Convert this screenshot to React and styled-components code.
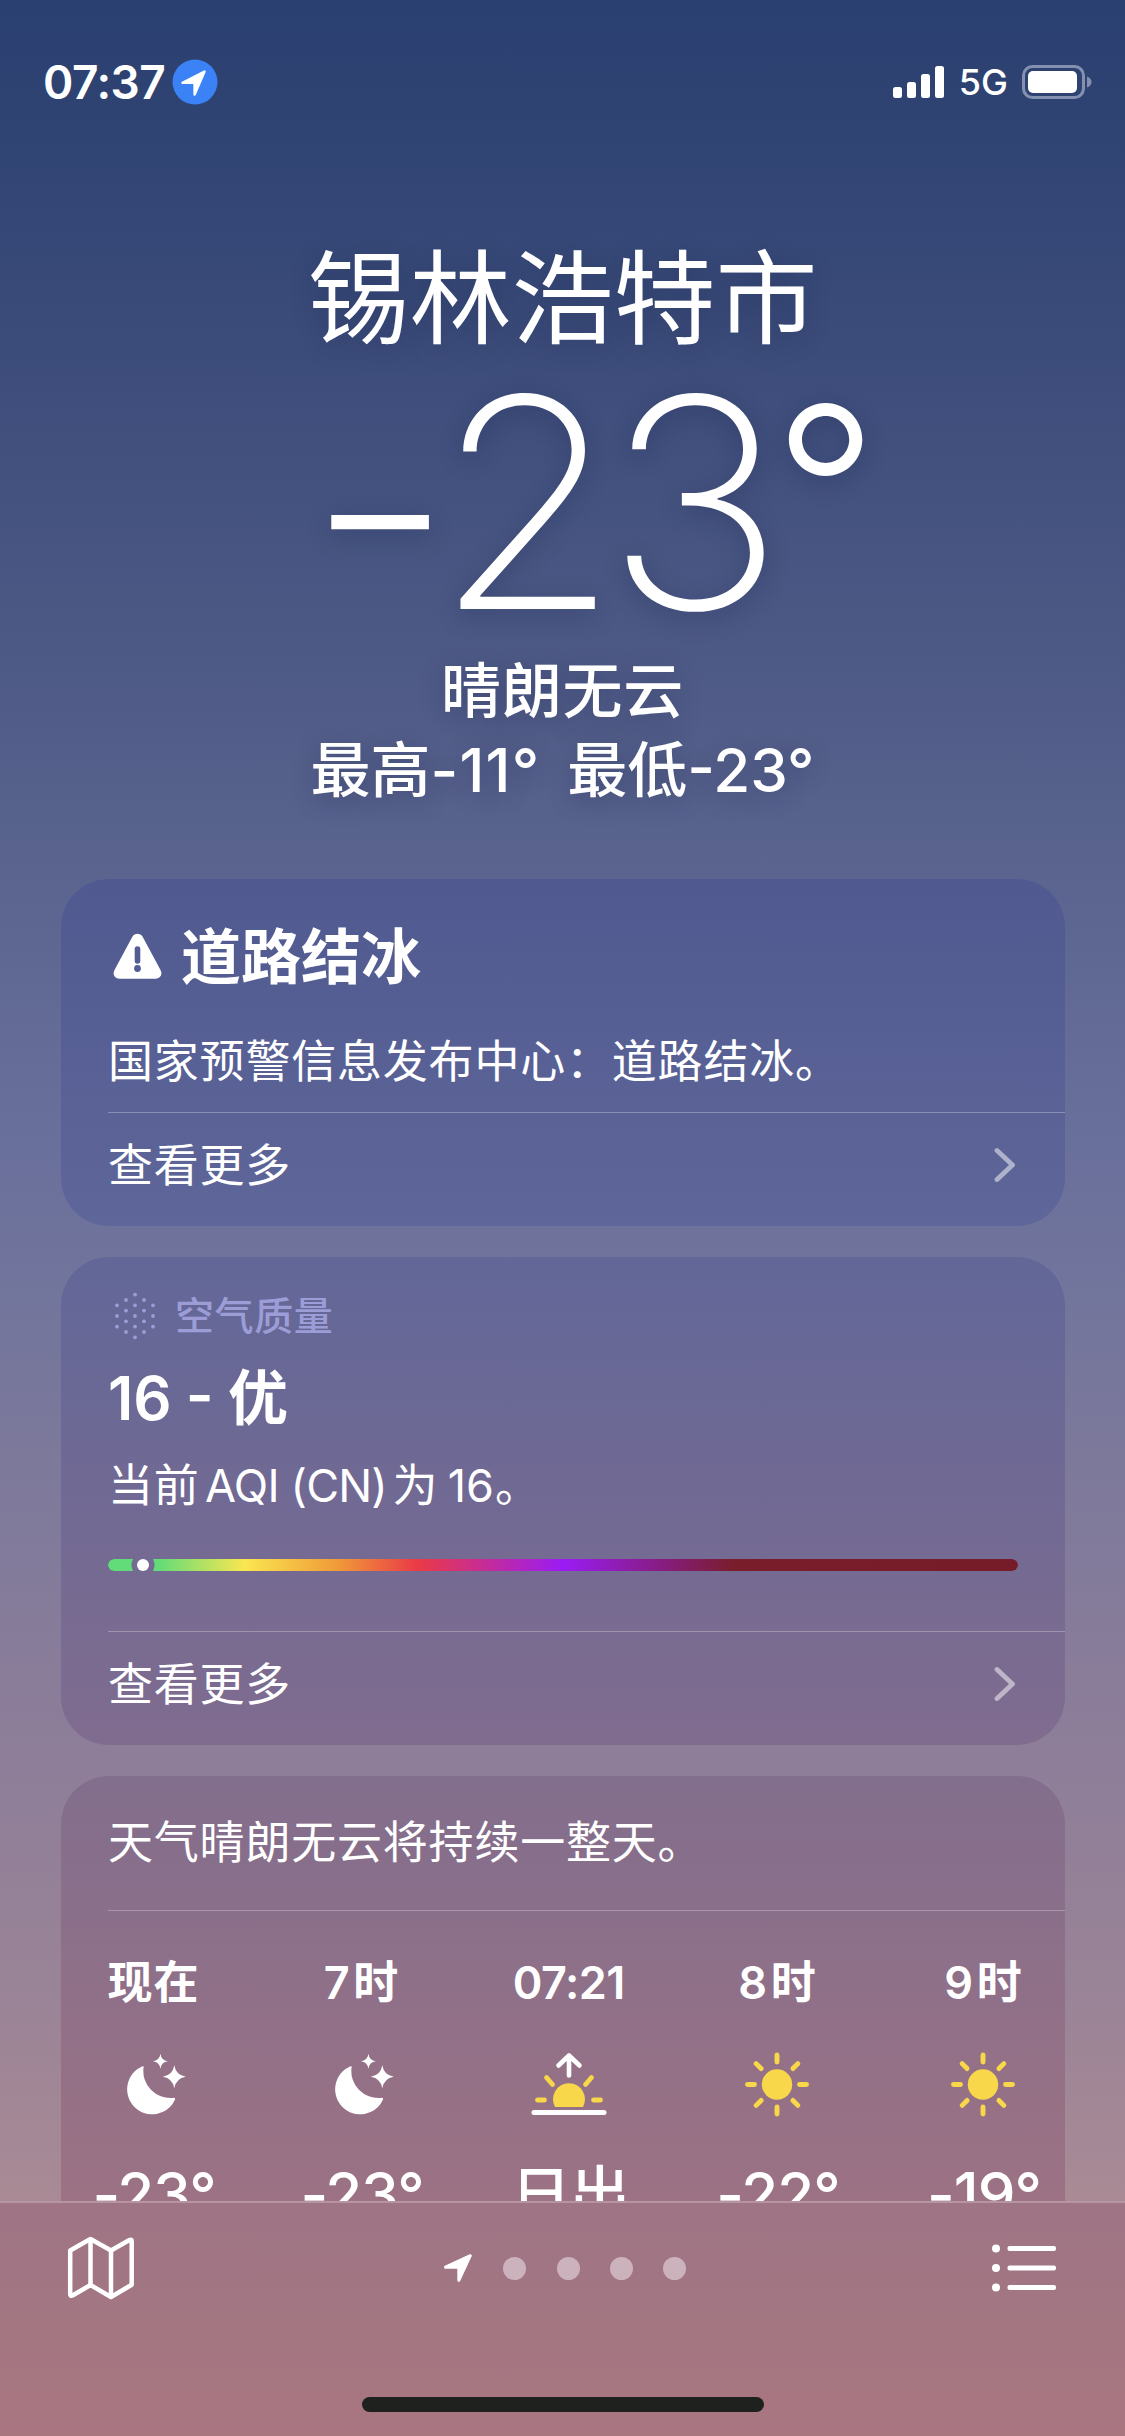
import React from 'react';
import styled, {createGlobalStyle, ThemeProvider} from 'styled-components';

const theme = {
    white: '#fff',
    sun: '#f8d84a',
    muted: '#9c9dd6',
    fontFamily: 'Inter, "Noto Sans CJK SC", sans-serif',
}

const GlobalStyle = createGlobalStyle`
  * {
    box-sizing: border-box;
  }
  body {
    margin: 0;
    background: #2a4070;
  }
`

const Screen = styled.div`
  width: 1125px;
  height: 2436px;
  display: flex;
  flex-direction: column;
  overflow: hidden;
  color: ${p => p.theme.white};
  font-family: ${p => p.theme.fontFamily};
  white-space: nowrap;
  background: linear-gradient(
    180deg,
    #2a4070 0,
    #304473 140px,
    #3f4e7c 400px,
    #4d5985 650px,
    #5a648f 870px,
    #6a709c 1150px,
    #70749c 1260px,
    #7f7a9b 1500px,
    #8e7e99 1760px,
    #998397 1980px,
    #a98a95 2200px
  );
`

const Content = styled.main`
  height: 2201px;
  overflow: hidden;
`

const StatusBar = styled.div`
  display: flex;
  align-items: center;
  height: 164px;
  padding: 0 33px 0 43px;
`

const Clock = styled.div`
  flex: 1;
  display: flex;
  align-items: center;
  gap: 7px;
  font-size: 46px;
  font-weight: 580;
`

const ClockText = styled.span`
  width: 122px;
  letter-spacing: -0.5px;
`

const Network = styled.span`
  margin: 0 14px;
  font-size: 36px;
  font-weight: 500;
`

const Header = styled.header`
  display: flex;
  flex-direction: column;
  align-items: center;
  padding-top: 79px;
  height: 715px;
  text-shadow: 0 6px 24px rgba(20, 30, 70, 0.3);
`

const City = styled.h1`
  margin: 0 0 6px;
  font-size: 102px;
  line-height: 112px;
  font-weight: 400;
`

const Temperature = styled.div`
  display: flex;
  align-self: flex-start;
  height: 280px;
  margin: 0 0 11px 330px;
  font-weight: 210;
`

const Minus = styled.span`
  display: flex;
  justify-content: center;
  width: 100px;
  font-size: 340px;
  line-height: 287px;
  font-weight: 170;
`

const Digits = styled.span`
  display: flex;
  justify-content: center;
  width: 306px;
  margin: 0 34px 0 19px;
  font-size: 293px;
  line-height: 283px;
  letter-spacing: -14px;
  transform: scaleX(1.026);
`

const Degree = styled.span`
  display: flex;
  justify-content: center;
  width: 73px;
  font-size: 231px;
  line-height: 256px;
  font-weight: 260;
`

const Summary = styled.div`
  font-size: 60px;
  line-height: 79px;
  font-weight: 500;
  letter-spacing: ${p => p.$spacing || 0}px;
  white-space: pre;
`

const High = styled.span`
  letter-spacing: 1.2px;
  margin-right: -5px;
`

const Cards = styled.div`
  display: flex;
  flex-direction: column;
  gap: 31px;
  padding: 0 60px 0 61px;
`

const Card = styled.section`
  height: ${p => p.$height}px;
  border-radius: 48px;
  background: linear-gradient(180deg, ${p => p.$from}, ${p => p.$to});
  padding-left: 47px;
  display: flex;
  flex-direction: column;
`

const AlertTitle = styled.h2`
  display: flex;
  align-items: center;
  gap: 18px;
  margin: 37px 0 0;
  padding-left: 4px;
  height: 80px;
  font-size: 60px;
  font-weight: 700;
`

const AlertName = styled.span`
  padding-bottom: 8px;
`

const Paragraph = styled.p`
  margin: ${p => p.$top}px 0 0;
  height: 60px;
  font-size: 45px;
  line-height: 60px;
  letter-spacing: 0.8px;
`

const AqiStandard = styled.span`
  margin: 0 -8px 0 -8px;
  letter-spacing: -0.8px;
`

const AqiNumber = styled.span`
  margin: 0 1px 0 -4px;
  letter-spacing: 0;
`

const MoreRow = styled.div`
  margin-top: auto;
  height: 114px;
  flex: none;
  display: flex;
  align-items: center;
  justify-content: space-between;
  padding: 0 49px 10px 0;
  border-top: 1px solid rgba(255, 255, 255, 0.28);
  font-size: 45px;
  letter-spacing: 0.75px;
`

const MoreText = styled.span`
  padding-bottom: 4px;
`

const CardLabel = styled.div`
  display: flex;
  align-items: center;
  gap: 18px;
  height: 50px;
  margin-top: 34px;
  padding-left: 6px;
  color: ${p => p.theme.muted};
  font-size: 39px;
  font-weight: 500;
  letter-spacing: 0.6px;
`

const LabelText = styled.span`
  padding-bottom: 6px;
`

const AqiValue = styled.div`
  height: 80px;
  margin-top: 17px;
  font-size: 60px;
  line-height: 80px;
  font-weight: 600;
  word-spacing: -1px;
`

const AqiTrack = styled.div`
  display: flex;
  align-items: center;
  height: 12px;
  margin: 43px 47px 0 0;
`

const AqiScale = styled.div`
  flex: 1;
  height: 12px;
  border-radius: 6px;
  background: linear-gradient(
    90deg,
    #62dc78 0,
    #62dc78 5.5%,
    #fae650 15%,
    #f09c38 25%,
    #ea3a46 34%,
    #9a1cf4 50%,
    #7a1d2a 69%,
    #751c28 100%
  );
  mask-image: radial-gradient(circle at 35px 6px, transparent 11px, #000 12px);
`

const AqiMarker = styled.i`
  width: 12px;
  height: 12px;
  margin: 0 -41px 0 29px;
  border-radius: 50%;
  background: ${p => p.theme.white};
`

const Divider = styled.div`
  height: 1px;
  flex: none;
  margin-top: 37px;
  background: rgba(255, 255, 255, 0.28);
`

const Hours = styled.div`
  display: flex;
  gap: 88px;
  margin: 42px 0 0 -15px;
`

const Hour = styled.div`
  flex: none;
  width: ${p => p.$width}px;
  display: flex;
  flex-direction: column;
  align-items: center;
`

const HourTime = styled.div`
  height: 60px;
  font-size: 45px;
  line-height: 60px;
  font-weight: 600;
  letter-spacing: ${p => p.$spacing}px;
  margin-right: ${p => -p.$spacing}px;
`

const HourIcon = styled.div`
  height: 66px;
  margin: 39px 0 36px;
`

const HourTemp = styled.div`
  margin-right: -2px;
  font-size: 60px;
  line-height: 80px;
  font-weight: 500;
  letter-spacing: -1px;
`

const Toolbar = styled.nav`
  height: 235px;
  flex: none;
  display: flex;
  flex-direction: column;
  align-items: center;
  border-top: 2px solid #b794a3;
  background: linear-gradient(180deg, #9f7485, #a27682 45%, #a97680);
`

const ToolbarRow = styled.div`
  width: 100%;
  height: 130px;
  display: flex;
  align-items: center;
  justify-content: space-between;
  padding: 0 68px 0 67px;
`

const Pages = styled.div`
  display: flex;
  align-items: center;
  gap: 30.4px;
  margin-left: 2px;
`

const PageDot = styled.i`
  width: 23px;
  height: 23px;
  border-radius: 50%;
  background: #ccb2bc;
`

const HomeIndicator = styled.div`
  width: 402px;
  height: 15px;
  margin-top: 64px;
  border-radius: 8px;
  background: #1f211f;
`

const LocationBadge = () => (
    <svg width="46" height="46" viewBox="0 0 46 46">
        <circle cx="23" cy="23" r="22.5" fill="#3b82f6"/>
        <path d="M32.5 12.5 22.6 35.5V23.8H10.5Z" fill="#fff" stroke="#fff" strokeWidth="2.5" strokeLinejoin="round"/>
    </svg>
)

const SignalIcon = () => (
    <svg width="52" height="34" viewBox="0 0 52 34" fill="#fff">
        <rect x="0" y="22" width="9" height="11" rx="2.5"/>
        <rect x="14" y="17" width="9" height="16" rx="2.5"/>
        <rect x="28" y="9" width="9" height="24" rx="2.5"/>
        <rect x="42" y="1" width="9" height="32" rx="2.5"/>
    </svg>
)

const BatteryIcon = () => (
    <svg width="70" height="36" viewBox="0 0 70 36">
        <rect x="1.5" y="2.5" width="60" height="31" rx="9" fill="none" stroke="#8390b0" strokeWidth="3"/>
        <path d="M65 12.5c3 1 4.5 3 4.5 5.5s-1.5 4.5-4.5 5.5z" fill="#8390b0"/>
        <rect x="6" y="7" width="49" height="22" rx="5" fill="#fff"/>
    </svg>
)

const WarningIcon = () => (
    <svg width="51" height="47" viewBox="0 0 51 47">
        <path
            d="M20.5 3.5c2.2-3.8 7.8-3.8 10 0l18 33.5c2.4 4.3-.3 8.7-5 8.7h-36c-4.7 0-7.4-4.4-5-8.7z"
            fill="#fff"
        />
        <path d="M25.5 16v12" stroke="#535d93" strokeWidth="5.6" strokeLinecap="round"/>
        <circle cx="25.5" cy="35.5" r="3.4" fill="#535d93"/>
    </svg>
)

const AQI_COLUMNS = [
    [5, [11.3, 22, 32.7]],
    [14, [6, 16.7, 27.3, 38]],
    [23, [0.7, 11.3, 22, 32.7, 43.3]],
    [32, [6, 16.7, 27.3, 38]],
    [41, [11.3, 22, 32.7]],
]

const AqiIcon = () => (
    <svg width="43" height="50" viewBox="2 -3 43 50" fill={theme.muted}>
        {AQI_COLUMNS.map(([x, ys]) => ys.map(y => <circle key={`${x}-${y}`} cx={x} cy={y} r="1.9"/>))}
    </svg>
)

const Chevron = () => (
    <svg width="22" height="36" viewBox="0 0 22 36">
        <path
            d="M3 3.5 18.5 18 3 32.5"
            fill="none"
            stroke="#fff"
            strokeOpacity=".5"
            strokeWidth="4.8"
            strokeLinecap="round"
            strokeLinejoin="round"
        />
    </svg>
)

const MoonIcon = () => (
    <svg width="68" height="66" viewBox="-6 0 68 66" fill="#fff">
        <path d="M17 14.5A25 25 0 1 0 50 47.5Q50.6 45.3 47.5 46A27 27 0 0 1 18.5 16Q19.3 13.3 17 14.5Z"/>
        <path d="M35.4 1.8q.9 6.6 7.5 7.5q-6.600.9-7.5 7.5q-.9-6.6-7.5-7.5q6.600-.9 7.5-7.5z"/>
        <path d="M49.3 13.2q1.6 9.900 11.5 11.500q-9.900 1.600-11.500 11.500q-1.600-9.900-11.500-11.500q9.900-1.600 11.500-11.500z"/>
    </svg>
)

const SunriseIcon = () => (
    <svg width="76" height="66" viewBox="0 0 76 66" fill="none" strokeLinecap="round" strokeLinejoin="round">
        <path d="M24 55A16 16 0 1 1 52 55Z" fill={theme.sun}/>
        <path d="M6.5 48h7M62.5 48h7M15.5 25.5l6 7M60.5 25.5l-6 7" stroke={theme.sun} strokeWidth="4.8"/>
        <path d="M38 23.5V4.5M27.5 13.5 38 3.5l10.5 10" stroke="#fff" strokeWidth="4.6"/>
        <path d="M3 60.5h70" stroke="#fff" strokeWidth="5"/>
    </svg>
)

const SUN_ANGLES = [0, 45, 90, 135, 180, 225, 270, 315]

const SunIcon = () => (
    <svg width="66" height="66" viewBox="-33 -32.5 66 66">
        <circle r="15.2" fill={theme.sun}/>
        {SUN_ANGLES.map(angle => (
            <path
                key={angle}
                d="M0-22.5v-7"
                transform={`rotate(${angle})`}
                stroke={theme.sun}
                strokeWidth="4.9"
                strokeLinecap="round"
            />
        ))}
    </svg>
)

const MapIcon = () => (
    <svg width="68" height="66" viewBox="0 0 68 66" fill="none" stroke="#fff" strokeWidth="4.5" strokeLinejoin="round">
        <path d="M3.2 15.5 23.5 4l20.5 11.5L62.5 5q2.2-1 2.2 1.2v43.5L44 62 23.5 50 5.5 60.5q-2.3 1-2.3-1.3z"/>
        <path d="M23.5 4v46M44 15.5V62"/>
    </svg>
)

const ArrowIcon = () => (
    <svg width="30" height="30" viewBox="0 0 30 30">
        <path d="M27.3 2.7 15.8 27.3V14.2H2.5Z" fill="#fff" stroke="#fff" strokeWidth="3" strokeLinejoin="round"/>
    </svg>
)

const ListIcon = () => (
    <svg width="65" height="48" viewBox="0 0 65 48" fill="#fff">
        {[4.5, 24, 43.5].map(y => (
            <g key={y}>
                <circle cx="4" cy={y} r="4"/>
                <rect x="15.5" y={y - 2.4} width="48.5" height="4.8" rx="2"/>
            </g>
        ))}
    </svg>
)

const HOURS = [
    {time: '现在', Icon: MoonIcon, temp: '-23°', width: 120, spacing: 0.8},
    {time: '7时', Icon: MoonIcon, temp: '-23°', width: 120, spacing: 3.5},
    {time: '07:21', Icon: SunriseIcon, temp: '日出', width: 120, spacing: -0.5},
    {time: '8时', Icon: SunIcon, temp: '-22°', width: 120, spacing: 3.5},
    {time: '9时', Icon: SunIcon, temp: '-19°', width: 116, spacing: 3.5},
]

const More = () => (
    <MoreRow>
        <MoreText>查看更多</MoreText>
        <Chevron/>
    </MoreRow>
)

const App = () => (
    <ThemeProvider theme={theme}>
        <GlobalStyle/>
        <Screen>
            <Content>
                <StatusBar>
                    <Clock>
                        <ClockText>07:37</ClockText>
                        <LocationBadge/>
                    </Clock>
                    <SignalIcon/>
                    <Network>5G</Network>
                    <BatteryIcon/>
                </StatusBar>
                <Header>
                    <City>锡林浩特市</City>
                    <Temperature>
                        <Minus>-</Minus>
                        <Digits>23</Digits>
                        <Degree>°</Degree>
                    </Temperature>
                    <Summary $spacing={0.8}>晴朗无云</Summary>
                    <Summary>最高<High>-11°</High>  最低-23°</Summary>
                </Header>
                <Cards>
                    <Card $height={347} $from="#505a90" $to="#5f6699">
                        <AlertTitle>
                            <WarningIcon/>
                            <AlertName>道路结冰</AlertName>
                        </AlertTitle>
                        <Paragraph $top={36}>国家预警信息发布中心：道路结冰。</Paragraph>
                        <More/>
                    </Card>
                    <Card $height={488} $from="#626798" $to="#806c8f">
                        <CardLabel>
                            <AqiIcon/>
                            <LabelText>空气质量</LabelText>
                        </CardLabel>
                        <AqiValue>16 - 优</AqiValue>
                        <Paragraph $top={18}>
                            当前 <AqiStandard>AQI (CN)</AqiStandard> 为 <AqiNumber>16</AqiNumber>。
                        </Paragraph>
                        <AqiTrack>
                            <AqiMarker/>
                            <AqiScale/>
                        </AqiTrack>
                        <More/>
                    </Card>
                    <Card $height={520} $from="#826e8d" $to="#a27382">
                        <Paragraph $top={37}>天气晴朗无云将持续一整天。</Paragraph>
                        <Divider/>
                        <Hours>
                            {HOURS.map(({time, Icon, temp, width, spacing}) => (
                                <Hour key={time} $width={width}>
                                    <HourTime $spacing={spacing}>{time}</HourTime>
                                    <HourIcon><Icon/></HourIcon>
                                    <HourTemp>{temp}</HourTemp>
                                </Hour>
                            ))}
                        </Hours>
                    </Card>
                </Cards>
            </Content>
            <Toolbar>
                <ToolbarRow>
                    <MapIcon/>
                    <Pages>
                        <ArrowIcon/>
                        <PageDot/>
                        <PageDot/>
                        <PageDot/>
                        <PageDot/>
                    </Pages>
                    <ListIcon/>
                </ToolbarRow>
                <HomeIndicator/>
            </Toolbar>
        </Screen>
    </ThemeProvider>
)

export default App;
